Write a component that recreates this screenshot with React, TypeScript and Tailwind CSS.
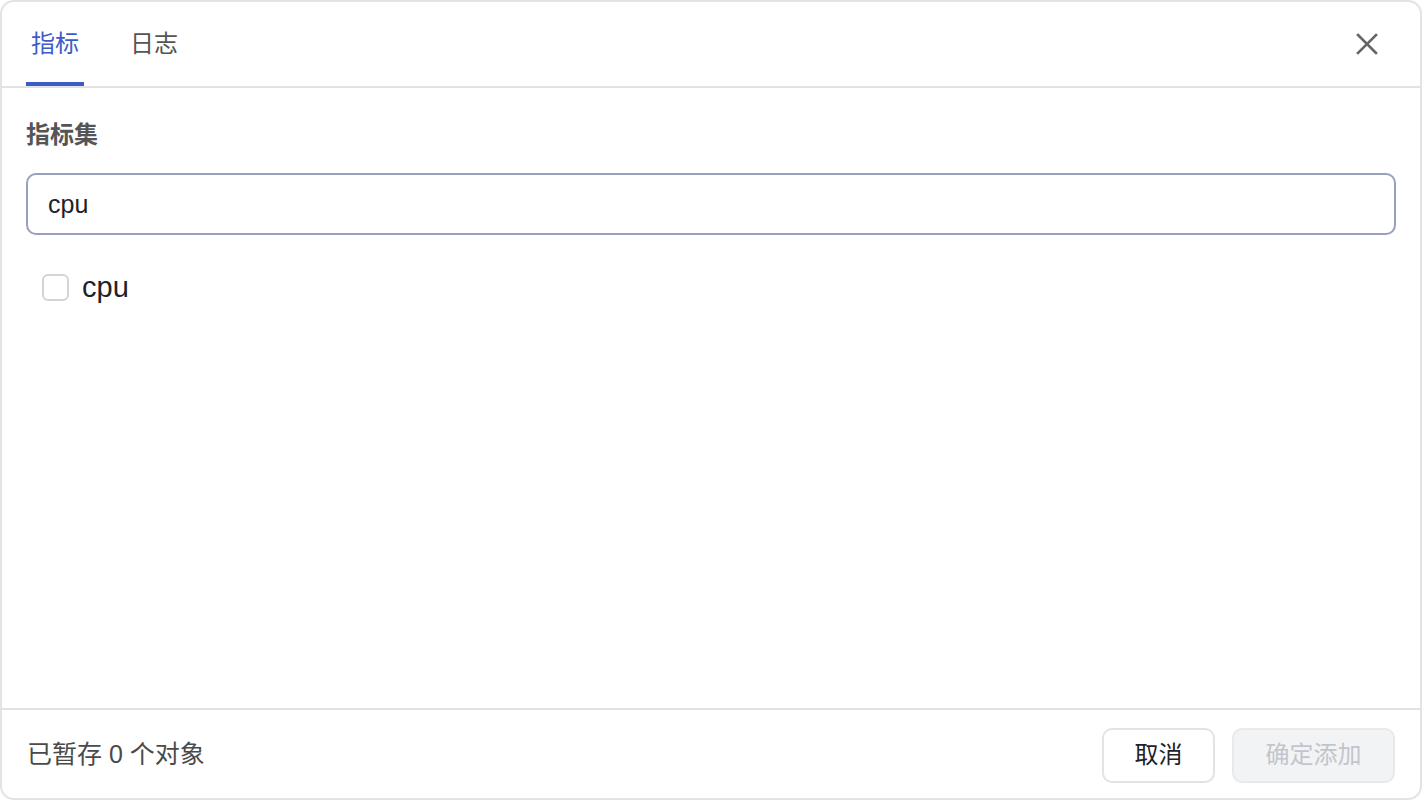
import React, { useState } from "react";

const font = { fontFamily: '"Liberation Sans", "Noto Sans CJK SC", sans-serif' };

const CloseIcon: React.FC = () => (
  <svg width="22" height="22" viewBox="0 0 22 22" fill="none" stroke="#666" strokeWidth="2.6" strokeLinecap="square">
    <path d="M2 2 L20 20 M20 2 L2 20" />
  </svg>
);

const App: React.FC = () => {
  const [tab, setTab] = useState("metric");
  const [query, setQuery] = useState("cpu");
  const [checked, setChecked] = useState(false);

  return (
    <div
      className="w-[1422px] h-[800px] bg-white border-2 border-[#e3e3e3] rounded-[14px] flex flex-col overflow-hidden"
      style={font}
    >
      {/* Tabs */}
      <div className="h-[86px] shrink-0 flex items-stretch justify-between border-b-2 border-[#e2e2e2] pl-[24px] pr-[42px]">
        <div className="flex items-stretch gap-[41px]">
          <button
            onClick={() => setTab("metric")}
            className={`relative px-[5px] text-[24px] flex items-center ${tab === "metric" ? "text-[#3b5cc8]" : "text-[#555]"}`}
          >
            指标
            {tab === "metric" && <span className="absolute left-0 right-0 bottom-0 h-[4px] bg-[#3b5cc8]" />}
          </button>
          <button
            onClick={() => setTab("log")}
            className={`relative px-[5px] text-[24px] flex items-center ${tab === "log" ? "text-[#3b5cc8]" : "text-[#555]"}`}
          >
            日志
            {tab === "log" && <span className="absolute left-0 right-0 bottom-0 h-[4px] bg-[#3b5cc8]" />}
          </button>
        </div>
        <button className="flex items-center">
          <CloseIcon />
        </button>
      </div>

      {/* Body */}
      <div className="flex-1 px-[24px] pt-[33px]">
        <div className="text-[24px] font-bold text-[#555] leading-[28px]">指标集</div>
        <input
          value={query}
          onChange={(e) => setQuery(e.target.value)}
          className="mt-[24px] w-full h-[62px] border-2 border-[#98a1b9] rounded-[10px] px-[20px] text-[25px] text-[#1f2329] outline-none"
          style={font}
        />
        <label className="mt-[35px] flex items-center gap-[13px] pl-[16px] cursor-pointer">
          <span
            onClick={() => setChecked(!checked)}
            className={`w-[27px] h-[27px] rounded-[6px] border-2 ${checked ? "border-[#3b5cc8] bg-[#3b5cc8]" : "border-[#d4d4d4] bg-white"}`}
          />
          <span className="text-[29px] text-[#1f2329] leading-[34px]">cpu</span>
        </label>
      </div>

      {/* Footer */}
      <div className="h-[90px] shrink-0 border-t-2 border-[#e2e2e2] flex items-center justify-between px-[25px] pt-[2px]">
        <span className="text-[25px] text-[#4a4a4a]">已暂存 0 个对象</span>
        <div className="flex items-center gap-[17px]">
          <button className="w-[113px] h-[55px] rounded-[10px] border-2 border-[#e3e3e3] bg-white text-[24px] text-[#1f2329]">
            取消
          </button>
          <button
            disabled
            className="w-[163px] h-[55px] rounded-[10px] border-2 border-[#e8e9eb] bg-[#f2f3f5] text-[24px] text-[#c2c5cc]"
          >
            确定添加
          </button>
        </div>
      </div>
    </div>
  );
};

export default App;
